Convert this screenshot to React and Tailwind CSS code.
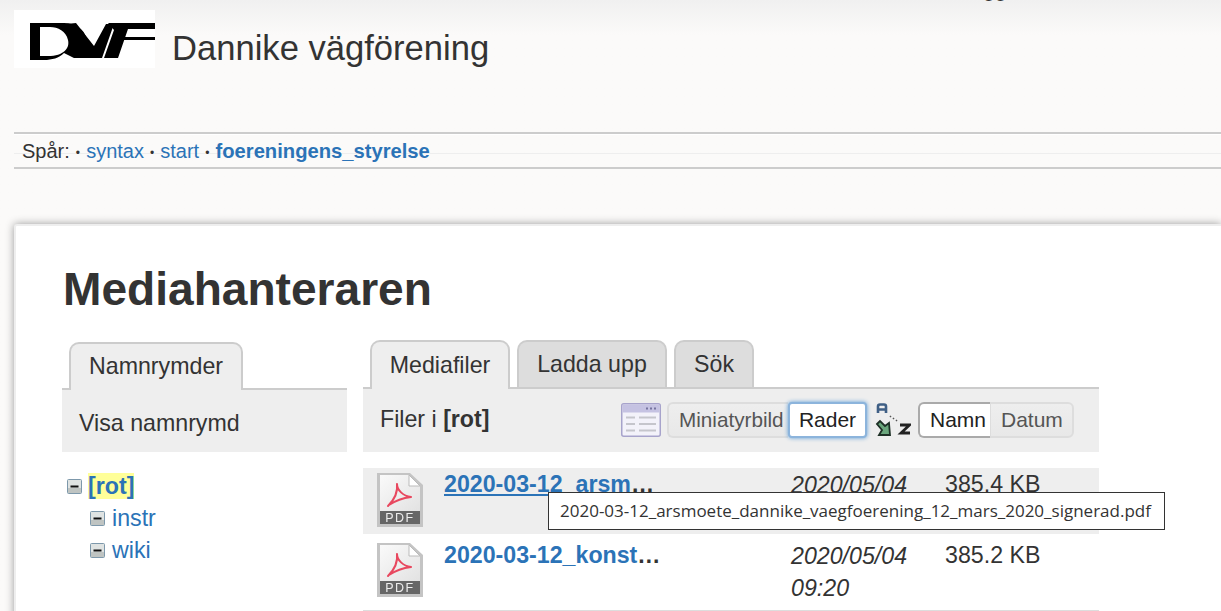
import React from 'react';

const MinusBox = () => (
  <svg width="15" height="15" viewBox="0 0 15 15" className="shrink-0">
    <rect x="0.5" y="0.5" width="14" height="14" rx="1" fill="#dfe3e2" stroke="#7d98ab" />
    <rect x="1" y="9" width="13" height="5" fill="#bfc4c2" />
    <rect x="3.5" y="6.5" width="8" height="2" fill="#111" />
  </svg>
);

const PdfIcon = () => (
  <svg width="46" height="56" viewBox="0 0 46 56" className="shrink-0 blur-[0.4px]">
    <defs>
      <linearGradient id="sheet" x1="0" y1="0" x2="1" y2="1">
        <stop offset="0" stopColor="#fafafa" />
        <stop offset="1" stopColor="#e2e2e2" />
      </linearGradient>
    </defs>
    <path d="M0 1H33L46 13V55H0Z" fill="#c4c4c4" />
    <path d="M3 3H32L43 14V39H3Z" fill="url(#sheet)" />
    <path d="M32 3V14H43Z" fill="#fff" stroke="#bbb" />
    <rect x="3" y="39" width="40" height="13" fill="#666" />
    <path
      d="M20 12C21 20 17 28 11 34M20 12C20 18 26 24 34 25M12 33C18 29 26 26 34 25"
      fill="none"
      stroke="#e8485f"
      strokeWidth="2"
      strokeLinecap="round"
    />
    <text x="23" y="50" textAnchor="middle" fontSize="12.500" fontFamily="Liberation Sans, sans-serif" fill="#eee" letterSpacing="1.500">
      PDF
    </text>
  </svg>
);

const ListViewIcon = () => (
  <svg width="40" height="34" viewBox="0 0 40 34" className="shrink-0">
    <rect x="0.75" y="0.75" width="38.5" height="32.5" rx="2" fill="#f3f2fa" stroke="#a7a3cb" strokeWidth="1.5" />
    <rect x="1.5" y="1.5" width="37" height="8" fill="#c5c2e2" />
    <path d="M25 5.5h2M29 5.5h2M33 5.5h2" stroke="#77749f" strokeWidth="2" />
    <path d="M5 14.5h9M18 14.5h17M5 21h9M18 21h17M5 27.5h9M18 27.5h17" stroke="#c5c5cc" strokeWidth="2" />
  </svg>
);

const SortIcon = () => (
  <svg width="36" height="36" viewBox="0 0 36 36" className="shrink-0">
    <path d="M3 11V4.500Q3 2.500 5 2.500H9Q11 2.500 11 4.500V11M3 7.500H11" fill="none" stroke="#3f5f85" strokeWidth="2.600" />
    <path d="M15 14l1 1M18 16l1 1M21 18l1 1" stroke="#555" strokeWidth="1.500" />
    <path d="M2 22L5 19L10 24L14 21L15 33H4L7 28Z" fill="#6aa67c" stroke="#1e3026" strokeWidth="1.800" />
    <path d="M25 23H34.500L26 31H35" fill="none" stroke="#222" strokeWidth="2.800" />
  </svg>
);

const Logo = () => (
  <div className="w-[141px] h-[58px] bg-white shrink-0">
    <svg width="141" height="58" viewBox="0 0 141 58" className="blur-[0.5px]">
      <path fillRule="evenodd" d="M16 13H50C62 13 70 20 72 27L78 48H60L50 43C45 48 38 50 30 50H16Z M26 17V46H34C50 46 56 38 54 30C52 21 44 17 36 17Z" fill="#000" />
      <path d="M52 14L76 48H88L100 14H92L80 36L62 13Z" fill="#000" />
      <path d="M94 13H141V19H114L104 48H90L100 20Z" fill="#000" />
      <path d="M106 27H141V30H106Z" fill="#000" />
    </svg>
  </div>
);

const rows = [
  { name: '2020-03-12_arsm', date: '2020/05/04', size: '385.4 KB', hover: true },
  { name: '2020-03-12_konst', date: '2020/05/04', time: '09:20', size: '385.2 KB' },
];

export default function App() {
  return (
    <div className="relative w-[1221px] h-[611px] overflow-hidden bg-gradient-to-b from-[#f0f0f0] to-[#fbfaf9] to-[35px] text-[#333] font-['Liberation_Sans',Arial,sans-serif]">
      {/* clipped user tools above the fold */}
      <div className="absolute left-[959px] top-[-24px] text-[21.5px] leading-[26px]">Logga in</div>

      <header className="pt-[10px] pl-[14px] h-[132px]">
        <div className="flex items-start">
          <Logo />
          <h1 className="ml-[17px] mt-[17px] text-[34.6px] leading-[42px]">Dannike vägförening</h1>
        </div>
      </header>

      {/* breadcrumbs */}
      <div className="ml-[14px] h-[37px] border-y-2 border-[#ccc] relative">
        <div className="h-[1px] bg-white" />
        <div className="absolute left-0 right-0 top-[19px] h-[1px] bg-[#eee]" />
        <div className="relative pl-[8px] pt-[1px] text-[20px] leading-[31px] whitespace-nowrap">
          Spår: <span className="text-[12px] align-[1px] mx-[0.5px]">•</span>{' '}
          <span className="text-[#2b73b7]">syntax</span>{' '}
          <span className="text-[12px] align-[1px] mx-[0.5px]">•</span>{' '}
          <span className="text-[#2b73b7]">start</span>{' '}
          <span className="text-[12px] align-[1px] mx-[0.5px]">•</span>{' '}
          <span className="text-[#2b73b7] font-bold text-[20.2px]">foereningens_styrelse</span>
        </div>
      </div>

      {/* page */}
      <main className="ml-[14px] mt-[55px] h-[500px] bg-white border-t-2 border-l-2 border-[#eee] rounded-tl-[3px] shadow-[0_0_8px_#999] pl-[46px]">
        <h1 className="ml-[1px] pt-[36px] text-[46.1px] leading-[54px] font-bold">Mediahanteraren</h1>

        <div className="flex mt-[24px]">
          {/* namespaces */}
          <section className="w-[285px] shrink-0 pt-[2px]">
            <div className="h-[48px] flex items-end border-b-2 border-[#ccc] pl-[7px]">
              <div className="w-[174px] h-[48px] -mb-[2px] border-2 border-b-0 border-[#ccc] rounded-t-[10px] bg-[#eee] text-[23.2px] leading-[45px] text-center">
                Namnrymder
              </div>
            </div>
            <div className="h-[62px] bg-[#eee] pl-[17px] text-[23.2px] leading-[66px]">Visa namnrymd</div>

            <ul className="mt-[21px] text-[23.2px]">
              <li className="flex items-center gap-[6px] pl-[5px] h-[26px]">
                <MinusBox />
                <span className="bg-[#ff9] font-bold text-[#2b73b7] leading-[26px]">[rot]</span>
              </li>
              <li className="flex items-center gap-[7px] pl-[28px] h-[32px] mt-[3px]">
                <MinusBox />
                <span className="text-[#2b73b7]">instr</span>
              </li>
              <li className="flex items-center gap-[7px] pl-[28px] h-[32px]">
                <MinusBox />
                <span className="text-[#2b73b7]">wiki</span>
              </li>
            </ul>
          </section>

          {/* files */}
          <section className="ml-[16px] w-[736px] shrink-0">
            <div className="h-[49px] flex items-end gap-[7px] border-b-2 border-[#ccc] pl-[7px]">
              <div className="w-[140px] h-[49px] -mb-[2px] border-2 border-b-0 border-[#ccc] rounded-t-[10px] bg-[#eee] text-[23.2px] leading-[46px] text-center">
                Mediafiler
              </div>
              <div className="w-[150px] h-[47px] border-2 border-b-0 border-[#ccc] rounded-t-[10px] bg-[#ddd] text-[23.2px] leading-[44px] text-center">
                Ladda upp
              </div>
              <div className="w-[80px] h-[47px] border-2 border-b-0 border-[#ccc] rounded-t-[10px] bg-[#ddd] text-[23.2px] leading-[44px] text-center">
                Sök
              </div>
            </div>

            <div className="h-[63px] bg-[#eee] flex items-center pl-[17px] pr-[25px] text-[23.2px]">
              <div className="-mt-[2px]">
                Filer i <strong>[rot]</strong>
              </div>
              <div className="ml-auto flex items-center -mt-[1px]">
                <div className="mr-[1px]">
                  <ListViewIcon />
                </div>
                <div className="ml-[5px] flex h-[36px] leading-[31px] text-[21px]">
                  <div className="w-[121px] pl-[10px] border-2 border-r-0 border-[#ddd] rounded-l-[6px] bg-gradient-to-b from-[#eee] to-[#e8e8e8] text-[#555] text-[20.7px]">
                    Miniatyrbild
                  </div>
                  <div className="w-[79px] text-center border-2 border-[#8cb4dc] rounded-[4px] bg-white text-[#222] shadow-[0_0_4px_#5b9bd5]">
                    Rader
                  </div>
                </div>
                <div className="ml-[8px]">
                  <SortIcon />
                </div>
                <div className="ml-[7px] flex h-[36px] leading-[31px] text-[21px]">
                  <div className="w-[72px] pl-[10px] border-2 border-r-0 border-[#aaa] rounded-l-[6px] bg-white text-[#222]">
                    Namn
                  </div>
                  <div className="w-[84px] pl-[10px] border-2 border-l-[1px] border-[#ddd] rounded-r-[6px] bg-gradient-to-b from-[#eee] to-[#e8e8e8] text-[#555]">
                    Datum
                  </div>
                </div>
              </div>
            </div>

            <div className="mt-[16px] text-[23.2px]">
              {rows.map(row => (
                <div
                  key={row.name}
                  className={`flex items-start pl-[14px] ${row.hover ? 'h-[66px] bg-[#eee]' : 'h-[77px] pt-[5px] border-b border-[#ddd]'}`}
                >
                  <div className={row.hover ? 'mt-[4px]' : 'mt-[3px]'}>
                    <PdfIcon />
                  </div>
                  <div className="ml-[21px] w-[347px] font-bold mt-[1px] leading-[30px] whitespace-nowrap">
                    <span className={`text-[#2b73b7] ${row.hover ? 'underline' : ''}`}>{row.name}</span>…
                  </div>
                  <div className="w-[154px] italic mt-[1px] leading-[32px]">
                    {row.date}
                    {row.time && <div>{row.time}</div>}
                  </div>
                  <div className="mt-[1px] leading-[30px]">{row.size}</div>
                </div>
              ))}
            </div>
          </section>
        </div>
      </main>

      {/* browser tooltip over the first row */}
      <div className="absolute left-[548px] top-[492px] w-[617px] h-[38px] bg-white border border-[#333] pl-[11px] text-[17px] leading-[36px] font-['Open_Sans',sans-serif] text-[#333] whitespace-nowrap">
        2020-03-12_arsmoete_dannike_vaegfoerening_12_mars_2020_signerad.pdf
      </div>
    </div>
  );
}
